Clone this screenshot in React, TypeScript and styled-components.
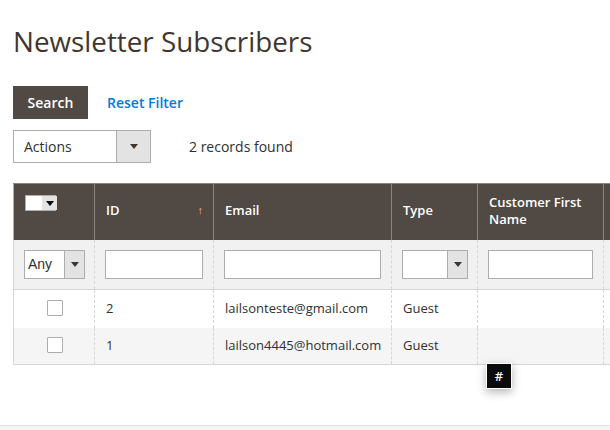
import React from "react";
import styled, { createGlobalStyle } from "styled-components";

const Global = createGlobalStyle`
  html, body { margin: 0; padding: 0; background: #fff; }
  body { font-family: "Open Sans", "Liberation Sans", sans-serif; color: #303030; overflow: hidden; }
  * { box-sizing: border-box; }
`;

const Page = styled.div`
  width: 610px;
  height: 430px;
  position: relative;
  overflow: hidden;
  display: flex;
  flex-direction: column;
`;

const Main = styled.div`
  flex: 1;
  padding: 24px 0 0 13px;
`;

const Title = styled.h1`
  margin: 0;
  font-size: 27.8px;
  line-height: 34px;
  font-weight: 400;
  color: #41362f;
`;

const SearchBar = styled.div`
  display: flex;
  align-items: center;
  gap: 19px;
  margin-top: 28px;
`;

const PrimaryButton = styled.button`
  height: 33px;
  width: 75px;
  border: 0;
  background: #514943;
  color: #fff;
  font-family: inherit;
  font-weight: 600;
  font-size: 14px;
  padding: 0;
`;

const LinkButton = styled.span`
  color: #007bdb;
  font-weight: 600;
  font-size: 14px;
`;

const ActionsBar = styled.div`
  display: flex;
  align-items: center;
  gap: 38px;
  margin-top: 11px;
`;

const Select = styled.div<{ $w: number; $h: number; $arrow: number }>`
  width: ${(p) => p.$w}px;
  height: ${(p) => p.$h}px;
  border: 1px solid #adadad;
  background: #fff;
  display: grid;
  grid-template-columns: 1fr ${(p) => p.$arrow}px;
`;

const SelectLabel = styled.span<{ $font?: string; $pad: number }>`
  display: flex;
  align-items: center;
  padding-left: ${(p) => p.$pad}px;
  font-size: 14px;
  color: #303030;
  font-family: ${(p) => p.$font || "inherit"};
`;

const SelectArrow = styled.span`
  background: #e3e3e3;
  border-left: 1px solid #adadad;
  display: flex;
  align-items: center;
  justify-content: center;
  &::after {
    content: "";
    border-left: 4px solid transparent;
    border-right: 4px solid transparent;
    border-top: 5px solid #41362f;
  }
`;

const Count = styled.span`
  font-size: 14px;
  color: #303030;
`;

const GridWrap = styled.div`
  margin-top: 20px;
  width: 640px;
`;

const Table = styled.table`
  border-collapse: collapse;
  table-layout: fixed;
  width: 640px;
  font-size: 13px;
`;

const Th = styled.th<{ $w: number }>`
  width: ${(p) => p.$w}px;
  height: 56px;
  background: #514943;
  color: #fff;
  font-weight: 600;
  font-size: 13px;
  line-height: 17px;
  text-align: left;
  padding: 0 11px 2px 11px;
  border-left: 1px solid #8a837f;
  border-right: 1px solid #8a837f;
  border-top: 1px solid #8a837f;
  position: relative;
  vertical-align: middle;
  &:first-child { border-left: 1px solid #adadad; padding: 11px 0 0 11px; vertical-align: top; }
`;

const SortArrow = styled.span`
  position: absolute;
  right: 10px;
  top: 17px;
  color: #f2b48a;
  font-size: 11px;
  font-weight: 400;
`;

const MultiCheck = styled.div`
  width: 31px;
  height: 16px;
  display: grid;
  grid-template-columns: 16px 15px;
  border: 1px solid #adadad;
`;

const MultiBox = styled.span`
  background: #fff;
`;

const MultiArrow = styled.span`
  background: #e3e3e3;
  display: flex;
  align-items: center;
  justify-content: center;
  &::after {
    content: "";
    border-left: 4px solid transparent;
    border-right: 4px solid transparent;
    border-top: 5px solid #000;
  }
`;

const FilterTd = styled.td`
  height: 50px;
  background: #f1f1f1;
  padding: 0 10px;
  border-left: 1px dashed #d6d6d6;
  border-right: 1px dashed #d6d6d6;
  border-bottom: 1px solid #d6d6d6;
  &:first-child { border-left: 1px solid #d6d6d6; }
`;

const TextInput = styled.div`
  height: 29px;
  border: 1px solid #adadad;
  background: #fff;
`;

const Row = styled.tr<{ $alt?: boolean }>`
  background: ${(p) => (p.$alt ? "#f5f5f5" : "#fff")};
`;

const Td = styled.td<{ $h: number; $last?: boolean }>`
  height: ${(p) => p.$h}px;
  padding: 0 11px 2px 11px;
  color: #303030;
  border-left: 1px dashed #d6d6d6;
  border-right: 1px dashed #d6d6d6;
  border-bottom: ${(p) => (p.$last ? "1px solid #d6d6d6" : "0")};
  white-space: nowrap;
  &:first-child { border-left: 1px solid #d6d6d6; text-align: center; padding: 0 0 4px 2px; }
`;

const Checkbox = styled.span`
  display: inline-block;
  width: 16px;
  height: 16px;
  border: 1px solid #adadad;
  background: #fff;
  border-radius: 1px;
  vertical-align: middle;
`;

const Tooltip = styled.div`
  position: absolute;
  left: 486px;
  top: 363px;
  width: 26px;
  height: 26px;
  background: #0b0b0b;
  border: 1px solid #fff;
  color: #fff;
  font-size: 13px;
  font-weight: 600;
  display: flex;
  align-items: center;
  justify-content: center;
  box-shadow: 0 3px 10px rgba(0, 0, 0, 0.3);
`;

const Footer = styled.div`
  height: 5px;
  background: #f5f5f5;
  border-top: 1px solid #e3e3e3;
`;

const rows = [
  { id: "2", email: "lailsonteste@gmail.com", type: "Guest" },
  { id: "1", email: "lailson4445@hotmail.com", type: "Guest" },
];

export default function App() {
  return (
    <Page>
      <Global />
      <Main>
        <Title>Newsletter Subscribers</Title>
        <SearchBar>
          <PrimaryButton>Search</PrimaryButton>
          <LinkButton>Reset Filter</LinkButton>
        </SearchBar>
        <ActionsBar>
          <Select $w={138} $h={33} $arrow={34}>
            <SelectLabel $pad={10}>Actions</SelectLabel>
            <SelectArrow />
          </Select>
          <Count>2 records found</Count>
        </ActionsBar>
        <GridWrap>
          <Table>
            <thead>
              <tr>
                <Th $w={81}>
                  <MultiCheck>
                    <MultiBox />
                    <MultiArrow />
                  </MultiCheck>
                </Th>
                <Th $w={119}>
                  ID<SortArrow>↑</SortArrow>
                </Th>
                <Th $w={178}>Email</Th>
                <Th $w={86}>Type</Th>
                <Th $w={126}>Customer First Name</Th>
                <Th $w={50}></Th>
              </tr>
              <tr>
                <FilterTd>
                  <Select $w={61} $h={29} $arrow={20}>
                    <SelectLabel $pad={3} $font='"Liberation Sans", sans-serif'>Any</SelectLabel>
                    <SelectArrow />
                  </Select>
                </FilterTd>
                <FilterTd><TextInput /></FilterTd>
                <FilterTd><TextInput /></FilterTd>
                <FilterTd>
                  <Select $w={66} $h={29} $arrow={20}>
                    <SelectLabel $pad={3} />
                    <SelectArrow />
                  </Select>
                </FilterTd>
                <FilterTd><TextInput /></FilterTd>
                <FilterTd></FilterTd>
              </tr>
            </thead>
            <tbody>
              {rows.map((r, i) => {
                const last = i === rows.length - 1;
                const h = i === 0 ? 38 : 37;
                return (
                  <Row key={r.id} $alt={i === 1}>
                    <Td $h={h} $last={last}><Checkbox /></Td>
                    <Td $h={h} $last={last}>{r.id}</Td>
                    <Td $h={h} $last={last}>{r.email}</Td>
                    <Td $h={h} $last={last}>{r.type}</Td>
                    <Td $h={h} $last={last}></Td>
                    <Td $h={h} $last={last}></Td>
                  </Row>
                );
              })}
            </tbody>
          </Table>
        </GridWrap>
      </Main>
      <Footer />
      <Tooltip>#</Tooltip>
    </Page>
  );
}
